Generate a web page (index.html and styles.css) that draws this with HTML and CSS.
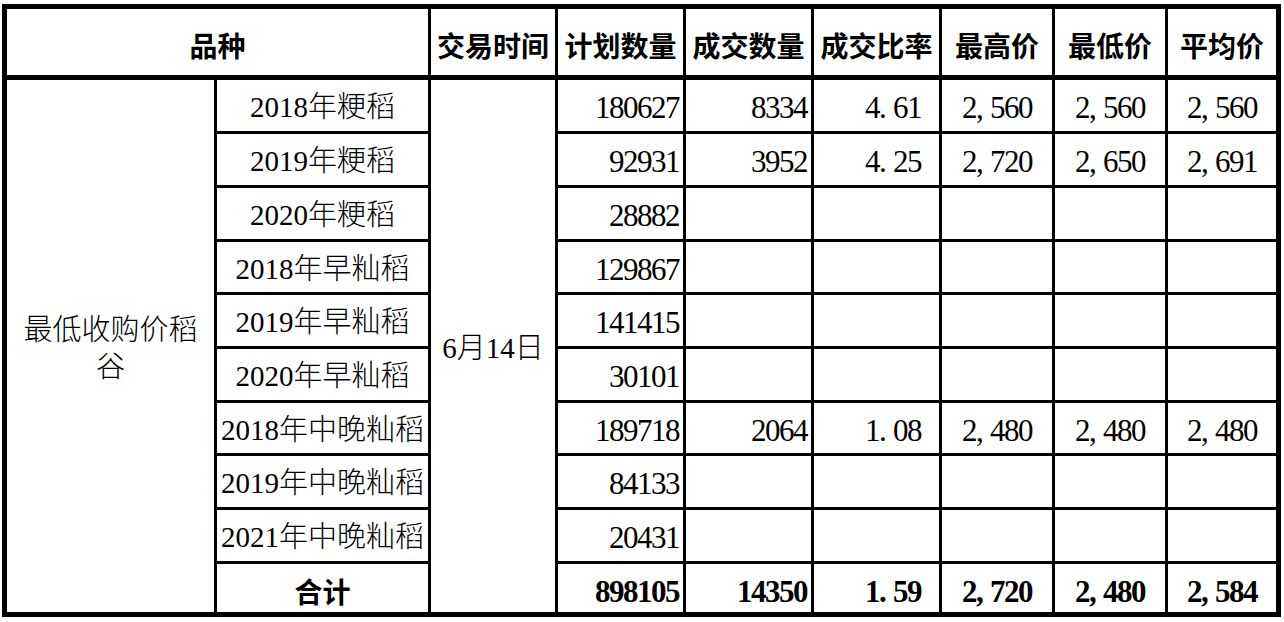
FILE: index.html
```html
<!DOCTYPE html>
<html lang="zh-CN">
<head>
<meta charset="utf-8">
<title>最低收购价稻谷交易结果</title>
<link rel="stylesheet" href="styles.css">
</head>
<body>
<div class="sheet">
  <div class="c hd span2">品种</div>
  <div class="c hd">交易时间</div>
  <div class="c hd">计划数量</div>
  <div class="c hd">成交数量</div>
  <div class="c hd">成交比率</div>
  <div class="c hd">最高价</div>
  <div class="c hd">最低价</div>
  <div class="c hd end">平均价</div>

  <div class="c kind">最低收购价稻谷</div>
  <div class="c name">2018年粳稻</div>
  <div class="c date">6月14日</div>
  <div class="c num">180627</div>
  <div class="c num">8334</div>
  <div class="c rate">4<span class="sep">.</span>61</div>
  <div class="c price">2<span class="sep">,</span>560</div>
  <div class="c price">2<span class="sep">,</span>560</div>
  <div class="c price end">2<span class="sep">,</span>560</div>

  <div class="c name">2019年粳稻</div>
  <div class="c num">92931</div>
  <div class="c num">3952</div>
  <div class="c rate">4<span class="sep">.</span>25</div>
  <div class="c price">2<span class="sep">,</span>720</div>
  <div class="c price">2<span class="sep">,</span>650</div>
  <div class="c price end">2<span class="sep">,</span>691</div>

  <div class="c name">2020年粳稻</div>
  <div class="c num">28882</div>
  <div class="c"></div>
  <div class="c"></div>
  <div class="c"></div>
  <div class="c"></div>
  <div class="c end"></div>

  <div class="c name">2018年早籼稻</div>
  <div class="c num">129867</div>
  <div class="c"></div>
  <div class="c"></div>
  <div class="c"></div>
  <div class="c"></div>
  <div class="c end"></div>

  <div class="c name">2019年早籼稻</div>
  <div class="c num">141415</div>
  <div class="c"></div>
  <div class="c"></div>
  <div class="c"></div>
  <div class="c"></div>
  <div class="c end"></div>

  <div class="c name">2020年早籼稻</div>
  <div class="c num">30101</div>
  <div class="c"></div>
  <div class="c"></div>
  <div class="c"></div>
  <div class="c"></div>
  <div class="c end"></div>

  <div class="c name">2018年中晚籼稻</div>
  <div class="c num">189718</div>
  <div class="c num">2064</div>
  <div class="c rate">1<span class="sep">.</span>08</div>
  <div class="c price">2<span class="sep">,</span>480</div>
  <div class="c price">2<span class="sep">,</span>480</div>
  <div class="c price end">2<span class="sep">,</span>480</div>

  <div class="c name">2019年中晚籼稻</div>
  <div class="c num">84133</div>
  <div class="c"></div>
  <div class="c"></div>
  <div class="c"></div>
  <div class="c"></div>
  <div class="c end"></div>

  <div class="c name">2021年中晚籼稻</div>
  <div class="c num">20431</div>
  <div class="c"></div>
  <div class="c"></div>
  <div class="c"></div>
  <div class="c"></div>
  <div class="c end"></div>

  <div class="c name tot">合计</div>
  <div class="c num tot">898105</div>
  <div class="c num tot">14350</div>
  <div class="c rate tot">1<span class="sep">.</span>59</div>
  <div class="c price tot">2<span class="sep">,</span>720</div>
  <div class="c price tot">2<span class="sep">,</span>480</div>
  <div class="c price tot end">2<span class="sep">,</span>584</div>
</div>
</body>
</html>
```

FILE: styles.css
```css
html, body {
  margin: 0;
  padding: 0;
  background: #ffffff;
}

body {
  padding: 4px 0 0 2px;
  color: #000000;
}

.sheet {
  display: inline-grid;
  grid-template-columns: 210px 214px 127px 128px 128px 128px 113px 113px 108px;
  grid-template-rows: 71px 54px 54px 54px 53px 54px 54px 53px 54px 54px 48px;
  border: 5px solid #000000;
}

.c {
  box-sizing: border-box;
  border-right: 3px solid #000000;
  border-bottom: 3px solid #000000;
  display: flex;
  align-items: center;
  justify-content: center;
  padding-top: 4px;
  font-family: "Liberation Serif", "Noto Sans CJK SC", serif;
  font-size: 29px;
  line-height: 1;
  white-space: nowrap;
  overflow: hidden;
}

.end {
  border-right: 0;
}

.hd {
  font-family: "Noto Sans CJK SC", sans-serif;
  font-weight: 700;
  font-size: 28px;
  padding-top: 6px;
  border-bottom-width: 5px;
}

.span2 {
  grid-column: span 2;
}

.kind {
  grid-row: span 10;
  border-bottom: 0;
  white-space: normal;
  text-align: center;
  padding: 0 5px;
  line-height: 37px;
  font-family: "Noto Sans CJK SC", sans-serif;
  font-weight: 300;
}

.date {
  grid-row: span 10;
  border-bottom: 0;
  font-weight: 300;
}

.name {
  font-weight: 300;
}

.num,
.rate,
.price {
  font-size: 31px;
  letter-spacing: -1.5px;
}

.num {
  justify-content: flex-end;
  padding-right: 4px;
}

.rate {
  justify-content: flex-end;
  padding-right: 18px;
}

.sep {
  display: inline-block;
  width: 14px;
  text-align: left;
}

.tot {
  border-bottom: 0;
  font-weight: 700;
  padding-top: 6px;
}

.name.tot {
  font-family: "Noto Sans CJK SC", sans-serif;
  font-weight: 700;
  font-size: 28px;
}
```
